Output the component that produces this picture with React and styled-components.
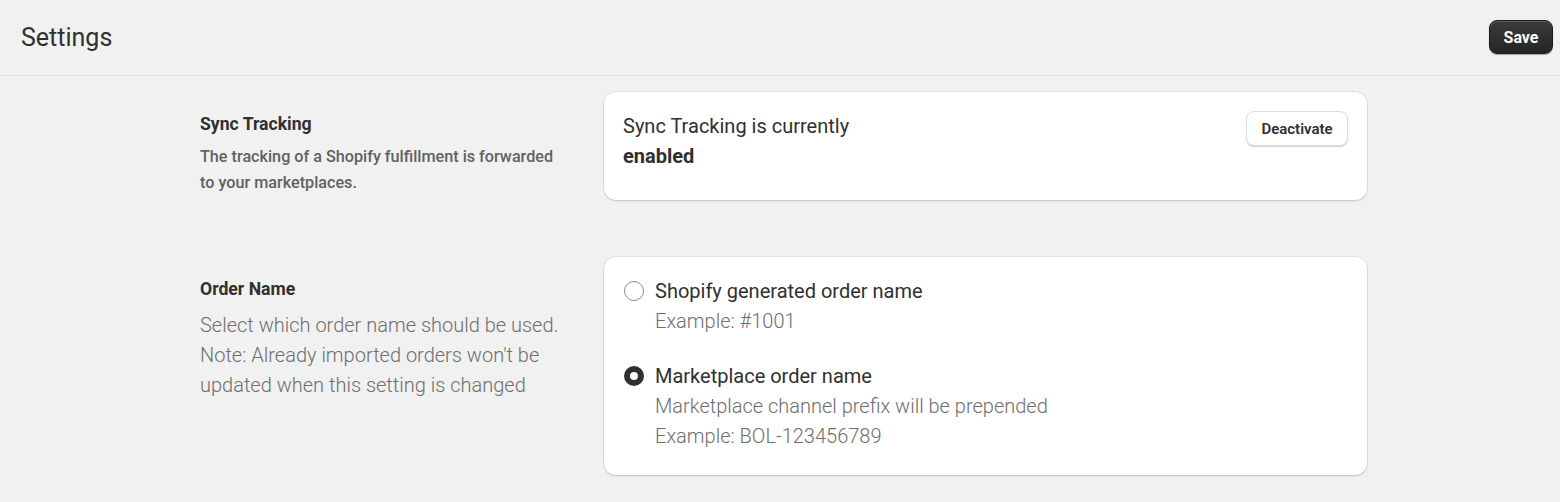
import React from "react";
import styled, { createGlobalStyle } from "styled-components";

const Global = createGlobalStyle`
  html, body { margin: 0; padding: 0; background: #f1f1f1; }
  body { font-family: Roboto, "Noto Sans", "Liberation Sans", sans-serif; color: #303030; }
  * { box-sizing: border-box; }
`;

const Page = styled.div`
  min-height: 502px;
  background: #f1f1f1;
`;

const Header = styled.header`
  height: 76px;
  border-bottom: 1px solid #e4e4e4;
  display: flex;
  align-items: center;
  justify-content: space-between;
  padding: 0 7px 0 21px;
`;

const Title = styled.h1`
  margin: 0;
  font-size: 25px;
  font-weight: 400;
  color: #303030;
  line-height: 30px;
`;

const PrimaryButton = styled.button`
  height: 34px;
  width: 64px;
  border-radius: 8px;
  border: 1px solid #1a1a1a;
  background: linear-gradient(#3a3a3a, #262626);
  box-shadow: inset 0 1px 0 rgba(255,255,255,0.2), 0 1px 1px rgba(0,0,0,0.3);
  color: #fff;
  font-family: Roboto, "Liberation Sans", sans-serif;
  font-weight: 700;
  font-size: 16px;
  padding: 0;
  margin-bottom: 1px;
`;

const Main = styled.main`
  display: flex;
  flex-direction: column;
  gap: 57px;
  padding: 16px 0 0 200px;
`;

const Section = styled.section`
  display: grid;
  grid-template-columns: 370px 763px;
  column-gap: 34px;
  align-items: start;
`;

const Aside = styled.div`
  padding-top: ${(p) => p.$top || 19}px;
`;

const AsideTitle = styled.h2`
  margin: 0;
  font-size: 17.6px;
  font-weight: 700;
  line-height: 24px;
  color: #303030;
`;

const AsideText = styled.p`
  max-width: 360px;
  margin: ${(p) => (p.$light ? "9px 0 0" : "8px 0 0")};
  font-size: ${(p) => (p.$light ? "20px" : "16.2px")};
  font-weight: ${(p) => (p.$light ? 300 : 500)};
  line-height: ${(p) => (p.$light ? "30px" : "26px")};
  color: ${(p) => (p.$light ? "#6e6e6e" : "#616161")};
`;

const Card = styled.div`
  background: #fff;
  border-radius: 12px;
  box-shadow: 0 0 0 1px rgba(0,0,0,0.06), 0 1px 2px rgba(0,0,0,0.14);
  padding: ${(p) => p.$pad};
`;

const StatusRow = styled.div`
  display: flex;
  justify-content: space-between;
  align-items: flex-start;
`;

const StatusText = styled.div`
  font-size: 20px;
  line-height: 30px;
  color: #303030;
  font-weight: 400;
`;

const Strong = styled.div`
  font-weight: 700;
`;

const SecondaryButton = styled.button`
  height: 35px;
  width: 102px;
  border-radius: 8px;
  border: 1px solid #dcdcdc;
  background: #fff;
  box-shadow: 0 1px 1px rgba(0,0,0,0.18);
  font-family: Roboto, "Liberation Sans", sans-serif;
  font-size: 15px;
  font-weight: 600;
  color: #303030;
  padding: 0;
  margin: 0;
`;

const Options = styled.div`
  display: flex;
  flex-direction: column;
  gap: 25px;
`;

const Option = styled.label`
  display: grid;
  grid-template-columns: 20px 1fr;
  column-gap: 12px;
  align-items: start;
`;

const Radio = styled.span`
  width: 20px;
  height: 20px;
  margin-top: 5px;
  margin-left: 1px;
  border-radius: 50%;
  background: #fff;
  border: ${(p) => (p.$checked ? "6px solid #303030" : "1px solid #8a8a8a")};
`;

const OptionText = styled.div`
  display: flex;
  flex-direction: column;
`;

const OptionLabel = styled.span`
  font-size: 20px;
  line-height: 30px;
  color: #303030;
`;

const OptionHelp = styled.span`
  font-size: 20px;
  line-height: 30px;
  font-weight: 300;
  color: #6e6e6e;
`;

export default function App() {
  return (
    <Page>
      <Global />
      <Header>
        <Title>Settings</Title>
        <PrimaryButton>Save</PrimaryButton>
      </Header>
      <Main>
        <Section>
          <Aside $top={20}>
            <AsideTitle>Sync Tracking</AsideTitle>
            <AsideText>
              The tracking of a Shopify fulfillment is forwarded to your marketplaces.
            </AsideText>
          </Aside>
          <Card $pad="19px 19px 29px">
            <StatusRow>
              <StatusText>
                Sync Tracking is currently
                <Strong>enabled</Strong>
              </StatusText>
              <SecondaryButton>Deactivate</SecondaryButton>
            </StatusRow>
          </Card>
        </Section>
        <Section>
          <Aside $top={20}>
            <AsideTitle>Order Name</AsideTitle>
            <AsideText $light>
              Select which order name should be used. Note: Already imported orders won't be
              updated when this setting is changed
            </AsideText>
          </Aside>
          <Card $pad="19px 19px 24px">
            <Options>
              <Option>
                <Radio />
                <OptionText>
                  <OptionLabel>Shopify generated order name</OptionLabel>
                  <OptionHelp>Example: #1001</OptionHelp>
                </OptionText>
              </Option>
              <Option>
                <Radio $checked />
                <OptionText>
                  <OptionLabel>Marketplace order name</OptionLabel>
                  <OptionHelp>Marketplace channel prefix will be prepended</OptionHelp>
                  <OptionHelp>Example: BOL-123456789</OptionHelp>
                </OptionText>
              </Option>
            </Options>
          </Card>
        </Section>
      </Main>
    </Page>
  );
}
